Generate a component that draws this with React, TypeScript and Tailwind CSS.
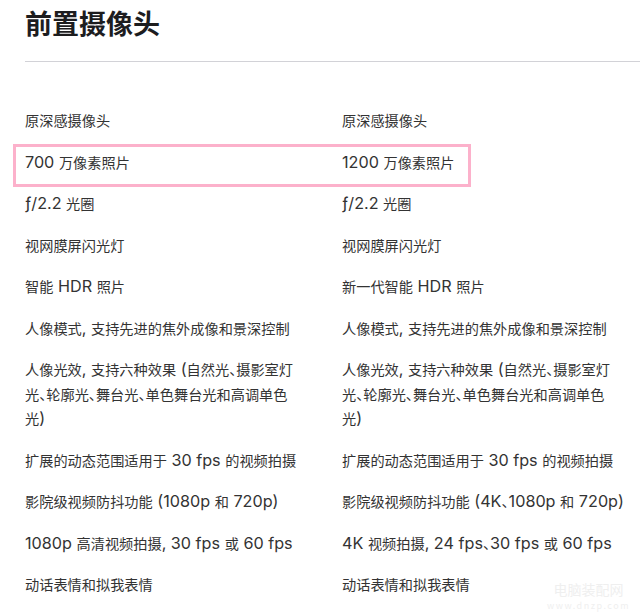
import React from "react";

const rows: [string, string][] = [
  ["原深感摄像头", "原深感摄像头"],
  ["700 万像素照片", "1200 万像素照片"],
  ["ƒ/2.2 光圈", "ƒ/2.2 光圈"],
  ["视网膜屏闪光灯", "视网膜屏闪光灯"],
  ["智能 HDR 照片", "新一代智能 HDR 照片"],
  ["人像模式, 支持先进的焦外成像和景深控制", "人像模式, 支持先进的焦外成像和景深控制"],
  [
    "人像光效, 支持六种效果 (自然光、摄影室灯\n光、轮廓光、舞台光、单色舞台光和高调单色\n光)",
    "人像光效, 支持六种效果 (自然光、摄影室灯\n光、轮廓光、舞台光、单色舞台光和高调单色\n光)",
  ],
  ["扩展的动态范围适用于 30 fps 的视频拍摄", "扩展的动态范围适用于 30 fps 的视频拍摄"],
  ["影院级视频防抖功能 (1080p 和 720p)", "影院级视频防抖功能 (4K、1080p 和 720p)"],
  ["1080p 高清视频拍摄, 30 fps 或 60 fps", "4K 视频拍摄, 24 fps、30 fps 或 60 fps"],
  ["动话表情和拟我表情", "动话表情和拟我表情"],
];

const CJK = /([\u2E80-\u9FFF\u3000-\u303F\uFF00-\uFFEF]+)/;

function Mixed({ text }: { text: string }) {
  const lines = text.split("\n");
  return (
    <>
      {lines.map((line, li) => {
        const parts = line.split(CJK).filter((p) => p.length > 0);
        return (
          <React.Fragment key={li}>
            {li > 0 && <br />}
            {parts.map((p, i) =>
              /[\u2E80-\u9FFF\u3000-\u303F\uFF00-\uFFEF]/.test(p) ? (
                <span
                  key={i}
                  className="text-[14.2px] leading-[16px] [font-feature-settings:'halt'] [font-family:'Noto_Sans_CJK_SC',sans-serif]"
                >
                  {p}
                </span>
              ) : (
                <span key={i} className="text-[16.2px] leading-[16px] [font-family:Inter,'Noto_Sans',sans-serif]">
                  {p}
                </span>
              )
            )}
          </React.Fragment>
        );
      })}
    </>
  );
}

export default function App() {
  return (
    <div
      className="relative w-[640px] h-[616px] overflow-hidden bg-white text-[#333]"
      style={{ fontFamily: '"Inter", "Noto Sans CJK SC", sans-serif' }}
    >
      <div className="pl-[25px]">
        <h1 className="pt-[5px] text-[27px] leading-[36px] font-bold text-[#1d1d1f] [font-family:'Noto_Sans_CJK_SC',sans-serif]">
          前置摄像头
        </h1>
        <div className="mt-[20px] h-px bg-[#d2d2d7]" />
        <div className="pt-[47px]">
          {rows.map(([a, b], i) => (
            <div key={i} className="relative grid grid-cols-[317px_298px] text-[14px] leading-[24.5px] pb-[17px]">
              {i === 1 && (
                <div className="absolute left-[-12px] top-[-7px] w-[458px] h-[43px] border-[3px] border-[#fcb1cb]" />
              )}
              <div className="whitespace-nowrap">
                <Mixed text={a} />
              </div>
              <div className="whitespace-nowrap">
                <Mixed text={b} />
              </div>
            </div>
          ))}
        </div>
      </div>
      <div className="absolute right-[10px] bottom-[6px] flex flex-col items-center gap-[5px] text-[#efefef] [font-family:'Noto_Sans_CJK_SC',sans-serif]">
        <span className="text-[14px] leading-[14px]">电脑装配网</span>
        <span className="text-[9px] leading-[9px] tracking-[1.5px]">www.dnzp.com</span>
      </div>
    </div>
  );
}
